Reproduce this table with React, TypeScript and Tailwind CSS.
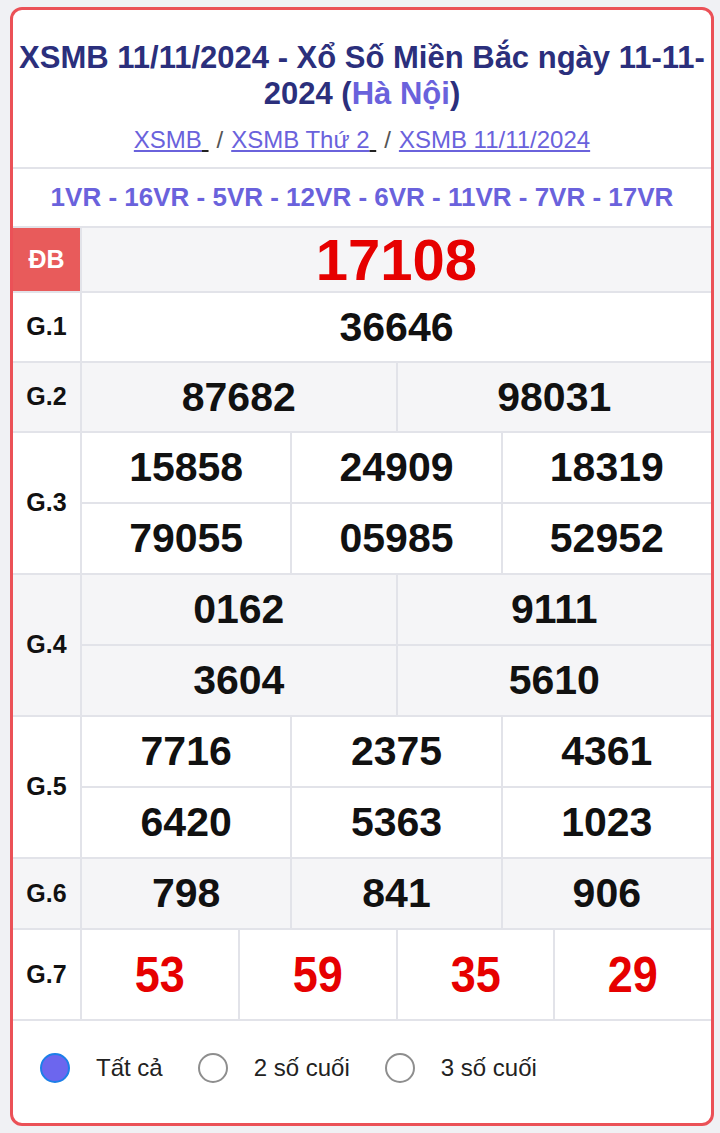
const font = { fontFamily: '"Liberation Sans", Arial, sans-serif' }

type Row = {
  label: string
  lines: string[][]
  height: string
  gray: boolean
  kind?: 'db' | 'g7'
}

const rows: Row[] = [
  { label: 'ĐB', lines: [['17108']], height: 'h-[65px]', gray: true, kind: 'db' },
  { label: 'G.1', lines: [['36646']], height: 'h-[70px]', gray: false },
  { label: 'G.2', lines: [['87682', '98031']], height: 'h-[70px]', gray: true },
  { label: 'G.3', lines: [['15858', '24909', '18319'], ['79055', '05985', '52952']], height: 'h-[142px]', gray: false },
  { label: 'G.4', lines: [['0162', '9111'], ['3604', '5610']], height: 'h-[142px]', gray: true },
  { label: 'G.5', lines: [['7716', '2375', '4361'], ['6420', '5363', '1023']], height: 'h-[142px]', gray: false },
  { label: 'G.6', lines: [['798', '841', '906']], height: 'h-[71px]', gray: true },
  { label: 'G.7', lines: [['53', '59', '35', '29']], height: 'h-[91px]', gray: false, kind: 'g7' },
]

function PrizeRow({ row }: { row: Row }) {
  const isDb = row.kind === 'db'
  const isG7 = row.kind === 'g7'
  return (
    <div className={`flex border-t-2 border-[#e2e3e9] ${row.height} ${row.gray ? 'bg-[#f5f5f7]' : 'bg-white'}`}>
      <div
        className={`w-[67px] shrink-0 flex items-center justify-center text-[25px] font-bold ${
          isDb ? 'bg-[#e85b5b] text-white' : 'text-[#111]'
        }`}
      >
        {row.label}
      </div>
      <div className="flex-1 flex flex-col">
        {row.lines.map((line, i) => (
          <div key={i} className={`flex flex-1 ${i > 0 ? 'border-t-2 border-[#e2e3e9]' : ''}`}>
            {line.map((num, j) => (
              <div
                key={j}
                className="flex-1 flex items-center justify-center border-l-2 border-[#e2e3e9]"
              >
                {isDb ? (
                  <span className="text-[58px] font-bold text-[#e60000] leading-none">{num}</span>
                ) : isG7 ? (
                  <span className="text-[50px] font-bold text-[#e60000] leading-none scale-x-90 inline-block">{num}</span>
                ) : (
                  <span className="text-[41px] font-bold text-[#111] leading-none">{num}</span>
                )}
              </div>
            ))}
          </div>
        ))}
      </div>
    </div>
  )
}

function Radio({ checked, label }: { checked?: boolean; label: string }) {
  return (
    <div className="flex items-center">
      <span
        className={`w-[30px] h-[30px] rounded-full border-2 ${
          checked ? 'bg-[#6c66ee] border-[#1d7fe8]' : 'bg-white border-[#8e8e8e]'
        }`}
      />
      <span className="ml-[26px] text-[24px] leading-[30px] text-[#222]">{label}</span>
    </div>
  )
}

export default function App() {
  return (
    <div className="min-h-[1133px] bg-[#f0f1f4] pt-[7px] pb-[7px] pl-[10px] pr-[6px]" style={font}>
      <div className="bg-white border-[3px] border-[#eb5157] rounded-[12px] overflow-hidden">
        <div className="pt-[30px] pb-[13px] text-center">
          <h1 className="text-[31px] leading-[36px] font-bold text-[#2b2f7c]">
            XSMB 11/11/2024 - Xổ Số Miền Bắc ngày 11-11-2024 (<span className="text-[#6a62dc]">Hà Nội</span>)
          </h1>
          <div className="mt-[14px] text-[24px] leading-[28px] text-[#555]">
            <a className="text-[#6a62dc] underline">XSMB</a>
            <span className="underline text-[#222]"> </span>
            <span className="mx-[8px]">/</span>
            <a className="text-[#6a62dc] underline">XSMB Thứ 2</a>
            <span className="underline text-[#222]"> </span>
            <span className="mx-[8px]">/</span>
            <a className="text-[#6a62dc] underline">XSMB 11/11/2024</a>
          </div>
        </div>
        <div className="border-t-2 border-[#e2e3e9] h-[59px] flex items-center justify-center text-[26px] font-bold text-[#6a62dc]">
          1VR - 16VR - 5VR - 12VR - 6VR - 11VR - 7VR - 17VR
        </div>
        {rows.map(r => (
          <PrizeRow key={r.label} row={r} />
        ))}
        <div className="border-t-2 border-[#e2e3e9] h-[104px] flex items-center gap-[35px] pl-[27px] pb-[8px]">
          <Radio checked label="Tất cả" />
          <Radio label="2 số cuối" />
          <Radio label="3 số cuối" />
        </div>
      </div>
    </div>
  )
}
